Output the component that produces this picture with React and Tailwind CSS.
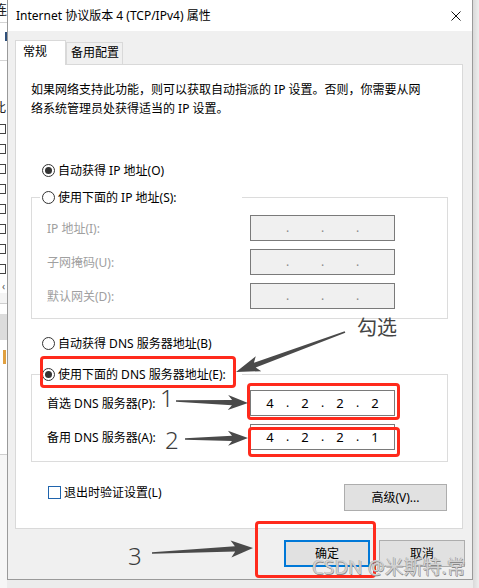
import React from 'react';

const ink = '#4a4a4a';

// arrow polygon from tail to tip, tapering shaft + swept head
const arrowPoints = ([x1, y1], [x2, y2], L, H) => {
  const dx = x2 - x1, dy = y2 - y1;
  const len = Math.hypot(dx, dy);
  const ux = dx / len, uy = dy / len;
  const nx = -uy, ny = ux;
  const bx = x2 - ux * L, by = y2 - uy * L;
  const cx = x2 - ux * (L + 4), cy = y2 - uy * (L + 4);
  const p = [
    [x1 + nx * 0.8, y1 + ny * 0.8],
    [bx + nx * 2.6, by + ny * 2.6],
    [cx + nx * H, cy + ny * H],
    [x2, y2],
    [cx - nx * H, cy - ny * H],
    [bx - nx * 2.6, by - ny * 2.6],
    [x1 - nx * 0.8, y1 - ny * 0.8],
  ];
  return p.map(([a, b]) => `${a.toFixed(1)},${b.toFixed(1)}`).join(' ');
};

const arrows = [
  { from: [345, 332], to: [236, 372], L: 20, H: 8 },
  { from: [176, 401], to: [248, 403], L: 16, H: 7.5 },
  { from: [185, 439], to: [248, 438], L: 16, H: 7.5 },
  { from: [152, 553], to: [253, 548], L: 18, H: 8.5 },
];

const Radio = ({ checked, label }) => (
  <div className="flex items-center h-[17px]">
    <span className="w-[13px] h-[13px] rounded-full border border-[#333333] bg-white flex items-center justify-center shrink-0">
      {checked && <span className="w-[7px] h-[7px] rounded-full bg-[#333333]" />}
    </span>
    <span className="ml-[3px] text-[12px] leading-[17px] whitespace-nowrap">{label}</span>
  </div>
);

const IpBox = ({ values, disabled }) => (
  <div className={`w-[145px] h-[26px] border border-[#7a7a7a] flex items-center pl-[5px] ${disabled ? 'bg-[#f0f0f0]' : 'bg-white'}`}>
    {[0, 1, 2, 3].map(i => (
      <React.Fragment key={i}>
        {i > 0 && (
          <span className={`w-[7px] text-center text-[12px] leading-[14px] ${disabled ? 'text-[#8a8a8a]' : 'text-black'}`}>.</span>
        )}
        <span className="w-[28px] text-center text-[13px] leading-[16px] text-black">{values ? values[i] : ''}</span>
      </React.Fragment>
    ))}
  </div>
);

const FieldRow = ({ label, disabled, values }) => (
  <div className="flex items-center h-[26px] pl-[15px]">
    <span className={`w-[203px] text-[12px] leading-[17px] ${disabled ? 'text-[#a0a0a0]' : 'text-black'}`}>{label}</span>
    <IpBox values={values} disabled={disabled} />
  </div>
);

const Group = ({ legend, children, bottom }) => (
  <div className={`ml-[15px] mr-[14px] border border-[#dcdcdc] ${bottom}`}>
    <div className="-mt-[9px] ml-[8px] w-[202px] pl-[2px] bg-white">
      {legend}
    </div>
    {children}
  </div>
);

const Button = ({ children, primary, className = '' }) => (
  <div className={`h-[27px] bg-[#e1e1e1] flex items-center justify-center text-[12px] leading-[17px] ${primary ? 'border-2 border-[#0078d7]' : 'border border-[#adadad]'} ${className}`}>
    {children}
  </div>
);

const LeftStrip = () => (
  <div className="w-[7px] h-[588px] flex flex-col overflow-hidden bg-white shrink-0">
    <div className="h-[22px] -ml-[6px] text-[13px] leading-[18px] text-[#222]">连</div>
    <div className="h-px bg-[#d4d4d4]" />
    <div className="h-[37px] pt-[9px] pl-[5px]"><div className="w-[2px] h-[9px] bg-[#2f4f7a]" /></div>
    <div className="h-px bg-[#d4d4d4]" />
    <div className="h-[58px] pt-[38px] -ml-[7px] text-[13px] leading-[17px] text-[#222]">此</div>
    {[0, 1, 2, 3, 4, 5, 6, 7].map(i => (
      <div key={i} className="h-[20px] flex items-center">
        <div className="w-[10px] h-[10px] -ml-[4px] border border-[#444] bg-white" />
      </div>
    ))}
    <div className="h-[14px] text-[10px] leading-[14px] text-[#555] pl-[2px]">‹</div>
    <div className="h-[10px] bg-[#f4f4f4]" />
    <div className="h-px bg-[#cfcfcf]" />
    <div className="h-[10px]" />
    <div className="h-[26px] bg-[#dcdcdc]" />
    <div className="h-[10px]" />
    <div className="h-[14px] w-[3px] ml-[3px] bg-[#e0a040]" />
    <div className="h-[90px]" />
    <div className="h-px bg-[#cfcfcf]" />
    <div className="flex-1 bg-[#f6f6f6]" />
  </div>
);

export default function App() {
  return (
    <div className="relative w-[479px] h-[588px] overflow-hidden bg-[#ececec] flex [font-family:'Noto_Sans','Noto_Sans_CJK_SC',sans-serif] text-black">
      <LeftStrip />

      <div className="w-[466px] h-[580px] border-l border-r border-b border-[#9a9a9a] bg-[#f0f0f0] flex flex-col shrink-0">
        {/* title bar */}
        <div className="h-[31px] bg-white flex items-center justify-between pl-[8px] pr-[10px]">
          <span className="text-[12px] leading-[17px]">Internet 协议版本 4 (TCP/IPv4) 属性</span>
          <svg width="10" height="10" viewBox="0 0 10 10" className="mr-[1px]">
            <path d="M0.5 0.5 L9.5 9.5 M9.5 0.5 L0.5 9.5" stroke="#111" strokeWidth="1" />
          </svg>
        </div>

        <div className="pt-[9px] px-[7px] pr-[9px]">
          {/* tabs */}
          <div className="relative z-10 -mb-px flex items-end">
            <div className="w-[51px] h-[25px] bg-white border border-b-0 border-[#d9d9d9] pl-[7px] pt-[2px] text-[12px] leading-[17px]">常规</div>
            <div className="w-[57px] h-[22px] mb-px bg-[#f0f0f0] border border-b-0 border-[#d9d9d9] pl-[4px] pt-[1px] text-[12px] leading-[17px]">备用配置</div>
          </div>

          {/* tab panel */}
          <div className="bg-white border border-[#d9d9d9] pt-[15px] pb-[17px]">
            <p className="pl-[15px] text-[12px] leading-[19px]">
              如果网络支持此功能，则可以获取自动指派的 IP 设置。否则，你需要从网<br />
              络系统管理员处获得适当的 IP 设置。
            </p>

            <div className="mt-[44px] pl-[26px]">
              <Radio checked label="自动获得 IP 地址(O)" />
            </div>

            <Group legend={<Radio label="使用下面的 IP 地址(S):" />} bottom="mt-[18px] pb-[9px]">
              <div className="mt-[9px] flex flex-col gap-[8px]">
                <FieldRow disabled label="IP 地址(I):" />
                <FieldRow disabled label="子网掩码(U):" />
                <FieldRow disabled label="默认网关(D):" />
              </div>
            </Group>

            <div className="mt-[16px] pl-[26px]">
              <Radio label="自动获得 DNS 服务器地址(B)" />
            </div>

            <Group legend={<Radio checked label="使用下面的 DNS 服务器地址(E):" />} bottom="mt-[22px] pb-[11px]">
              <div className="mt-[7px] flex flex-col gap-[8px]">
                <FieldRow label="首选 DNS 服务器(P):" values={['4', '2', '2', '2']} />
                <FieldRow label="备用 DNS 服务器(A):" values={['4', '2', '2', '1']} />
              </div>
            </Group>

            <div className="mt-[22px] flex items-start justify-between pl-[32px] pr-[15px]">
              <div className="flex items-center h-[17px]">
                <span className="w-[13px] h-[13px] border border-[#1f64ad] bg-white" />
                <span className="ml-[3px] text-[12px] leading-[17px]">退出时验证设置(L)</span>
              </div>
              <Button className="w-[103px]">高级(V)...</Button>
            </div>
          </div>
        </div>

        {/* dialog buttons */}
        <div className="mt-[11px] flex justify-end gap-[9px] pr-[7px]">
          <Button primary className="w-[86px]">确定</Button>
          <Button className="w-[86px]">取消</Button>
        </div>
      </div>

      <div className="flex-1 h-[588px] bg-linear-to-r from-[#d9d9d9] to-[#eeeeee]" />

      {/* annotations */}
      <div className="absolute left-[40px] top-[356px] w-[196px] h-[32px] border-[3px] border-[#ff2a1c] rounded-[4px]" />
      <div className="absolute left-[247px] top-[383px] w-[153px] h-[37px] border-[3px] border-[#ff2a1c] rounded-[4px]" />
      <div className="absolute left-[248px] top-[427px] w-[152px] h-[30px] border-[3px] border-[#ff2a1c] rounded-[4px]" />
      <div className="absolute left-[255px] top-[521px] w-[121px] h-[57px] border-[3px] border-[#ff2a1c] rounded-[4px]" />

      <svg className="absolute left-0 top-0 pointer-events-none" width="479" height="588">
        {arrows.map((a, i) => (
          <polygon key={i} points={arrowPoints(a.from, a.to, a.L, a.H)} fill={ink} />
        ))}
      </svg>

      <span className="absolute left-[357px] top-[318px] text-[20px] leading-[20px] text-[#444]">勾选</span>
      <span className="absolute left-[160px] top-[386px] text-[24px] leading-[24px] font-light text-[#3c3c3c]">1</span>
      <span className="absolute left-[165px] top-[428px] text-[24px] leading-[24px] font-light text-[#3c3c3c]">2</span>
      <span className="absolute left-[128px] top-[544px] text-[24px] leading-[24px] font-light text-[#3c3c3c]">3</span>

      <span className="absolute left-[312px] top-[558px] text-[19px] leading-[19px] text-[#e4e4e4]/80 whitespace-nowrap [text-shadow:0.5px_0.5px_0_#8a8a8a,-0.5px_-0.5px_0_#9a9a9a]">CSDN @米斯特.常</span>
    </div>
  );
}
